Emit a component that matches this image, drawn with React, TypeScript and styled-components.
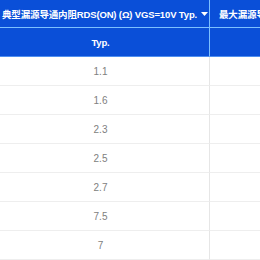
import React from "react";
import styled, { createGlobalStyle } from "styled-components";

const Global = createGlobalStyle`
  html, body { margin: 0; padding: 0; background: #fff; overflow: hidden; }
  body { font-family: "Liberation Sans", "Noto Sans CJK SC", sans-serif; }
`;

const Table = styled.div`
  display: grid;
  grid-template-columns: 210px 60px;
  width: 260px;
`;

const HeadCell = styled.div<{ $first?: boolean; $bottom?: boolean }>`
  background: #0a4fd8;
  color: #fff;
  font-size: 9.5px;
  font-weight: 700;
  height: ${(p) => (p.$bottom ? "28px" : "27px")};
  display: flex;
  align-items: center;
  justify-content: ${(p) => (p.$first && p.$bottom ? "center" : "flex-start")};
  padding: ${(p) =>
    p.$first ? (p.$bottom ? "0 8px 0 0" : "0 0 0 2px") : "0 0 0 9px"};
  white-space: nowrap;
  overflow: hidden;
  border-right: ${(p) => (p.$first ? "1px solid #7cc0ff" : "none")};
  border-bottom: 1px solid ${(p) => (p.$bottom ? "#4f8ff0" : "#7cc0ff")};
  font-family: "Liberation Sans", "Noto Sans CJK SC", sans-serif;
  letter-spacing: -0.15px;
`;

const Arrow = styled.svg`
  width: 7px;
  height: 4px;
  margin-left: 4px;
  flex: none;
`;

const Cell = styled.div<{ $first?: boolean }>`
  height: 28px;
  display: flex;
  align-items: center;
  justify-content: center;
  padding-right: ${(p) => (p.$first ? "8px" : "0")};
  font-size: 10px;
  color: #808080;
  border-bottom: 1px solid #eeeeee;
  border-right: ${(p) => (p.$first ? "1px solid #e6e6e6" : "none")};
`;

const values = ["1.1", "1.6", "2.3", "2.5", "2.7", "7.5", "7"];

export default function App() {
  return (
    <>
      <Global />
      <Table>
        <HeadCell $first>
          典型漏源导通内阻RDS(ON) (Ω) VGS=10V Typ.
          <Arrow viewBox="0 0 7 4">
            <path d="M0 0H7L3.5 4Z" fill="#fff" />
          </Arrow>
        </HeadCell>
        <HeadCell>最大漏源导通内阻</HeadCell>
        <HeadCell $first $bottom>Typ.</HeadCell>
        <HeadCell $bottom></HeadCell>
        {values.map((v, i) => (
          <React.Fragment key={i}>
            <Cell $first>{v}</Cell>
            <Cell></Cell>
          </React.Fragment>
        ))}
      </Table>
    </>
  );
}
